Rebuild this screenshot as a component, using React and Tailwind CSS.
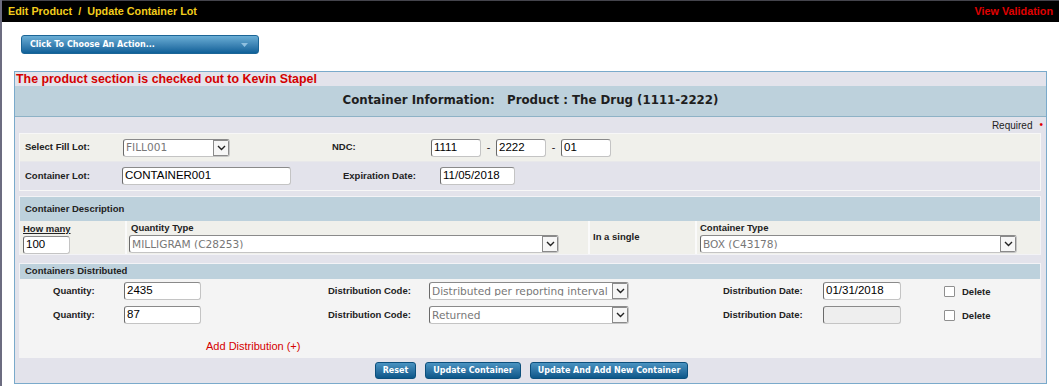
import React from 'react';

const lbl = "font-['Liberation_Sans',Arial,sans-serif] font-bold text-[9.5px] text-[#222]";

const Chevron = () => (
  <svg width="9" height="6" viewBox="0 0 9 6">
    <path d="M1 1 L4.5 4.5 L8 1" fill="none" stroke="#222" strokeWidth="1.4" />
  </svg>
);

const TextBox = ({ value, width, disabled }) => (
  <div
    className={`h-[18px] ${width} rounded-[3px] border border-[#c4c4c4] border-t-[#8a8a8a] border-l-[#6a6a6a] ${disabled ? 'bg-[#eeeeee]' : 'bg-white'} px-[2px] flex items-center font-['Liberation_Sans',Arial,sans-serif] text-[11.5px] text-black leading-none`}
  >
    {value}
  </div>
);

const SelectBox = ({ value, width }) => (
  <div
    className={`h-[18px] ${width} rounded-[3px] border border-[#c4c4c4] border-t-[#8a8a8a] border-l-[#6a6a6a] bg-white flex items-center overflow-hidden`}
  >
    <span className="flex-1 pl-[2px] whitespace-nowrap overflow-hidden font-['DejaVu_Sans',Verdana,sans-serif] text-[10.6px] text-[#777] leading-none">
      {value}
    </span>
    <span className="w-[16px] h-[16px] shrink-0 border border-[#8a8a8a] bg-[#f6f6f6] flex items-center justify-center">
      <Chevron />
    </span>
  </div>
);

const BlueButton = ({ children }) => (
  <button className="h-[17px] px-[7px] rounded-[3px] bg-gradient-to-b from-[#4a93c1] to-[#0b5789] border border-[#0c4f7c] text-white font-['DejaVu_Sans',Verdana,sans-serif] font-bold text-[8px] leading-none">
    {children}
  </button>
);

const SectionHead = ({ children }) => (
  <div className="h-[24px] bg-[#bdd1dc] flex items-center pl-[5px]">
    <span className={lbl}>{children}</span>
  </div>
);

const DistRow = ({ qty, code, date, disabled }) => (
  <div className="h-[24px] flex items-center">
    <span className={`${lbl} w-[71px] pl-[33px] box-content`}>Quantity:</span>
    <TextBox value={qty} width="w-[77px]" />
    <span className={`${lbl} ml-[127px] w-[101px]`}>Distribution Code:</span>
    <SelectBox value={code} width="w-[200px]" />
    <span className={`${lbl} ml-[94px] w-[100px]`}>Distribution Date:</span>
    <TextBox value={date} width="w-[78px]" disabled={disabled} />
    <span className="ml-[43px] w-[11px] h-[11px] border border-[#8f8f8f] bg-white rounded-[1px]" />
    <span className={`${lbl} ml-[7px] mt-[3px]`}>Delete</span>
  </div>
);

export default function App() {
  return (
    <div className="w-[1059px] min-h-[386px] bg-white border-l-2 border-[#6c6c80]">
      <div className="h-[22px] bg-black border-t border-[#44444c] flex items-center justify-between pl-[6px] pr-[6px] font-['Liberation_Sans',Arial,sans-serif] font-bold text-[10.8px]">
        <span className="text-[#f2cd1c]">Edit Product&nbsp; /&nbsp; Update Container Lot</span>
        <span className="text-[#e00000]">View Validation</span>
      </div>

      <div className="pt-[13px] pl-[19px]">
        <div className="w-[238px] h-[19px] rounded-[3px] bg-gradient-to-b from-[#6aaed5] to-[#0d6199] border border-[#1b6596] flex items-center justify-between pl-[8px] pr-[10px]">
          <span className="text-white font-['DejaVu_Sans',Verdana,sans-serif] font-bold text-[8px] leading-none">Click To Choose An Action...</span>
          <svg width="7" height="4" viewBox="0 0 7 4">
            <path d="M0 0 L7 0 L3.5 4 Z" fill="#8fc0e0" />
          </svg>
        </div>
      </div>

      <div className="mt-[17px] ml-[12px] w-[1033px] border border-[#7aaacb] bg-[#e3e3eb]">
        <div className="h-[14px] pl-[1px] flex items-center font-['Liberation_Sans',Arial,sans-serif] font-bold text-[12.4px] text-[#d40000] leading-none">
          The product section is checked out to Kevin Stapel
        </div>
        <div className="h-[31px] bg-[#bdd1dc] border-b border-[#8eb2c6] flex items-center justify-center font-['DejaVu_Sans',Verdana,sans-serif] font-bold text-[11.8px] text-[#1e1e1e]">
          Container Information:&nbsp;&nbsp; Product : The Drug (1111-2222)
        </div>
        <div className="h-[16px] flex items-center justify-end pr-[3px] font-['Liberation_Sans',Arial,sans-serif] text-[10px] text-[#222]">
          Required
          <span className="ml-[7px] text-[#e00000] text-[10px] leading-none">•</span>
        </div>

        <div className="mx-[4px] mr-[5px] border border-[#f7f7f7]">
          <div className="h-[28px] bg-[#f0f0eb] flex items-center pl-[5px] border-b border-[#e8e8ea]">
            <span className={`${lbl} w-[98px]`}>Select Fill Lot:</span>
            <SelectBox value="FILL001" width="w-[107px]" />
            <span className={`${lbl} ml-[102px] w-[99px]`}>NDC:</span>
            <TextBox value="1111" width="w-[50px]" />
            <span className="w-[15px] text-center text-[11px] text-[#222]">-</span>
            <TextBox value="2222" width="w-[50px]" />
            <span className="w-[15px] text-center text-[11px] text-[#222]">-</span>
            <TextBox value="01" width="w-[50px]" />
          </div>
          <div className="h-[28px] bg-[#e3e3eb] flex items-center pl-[5px]">
            <span className={`${lbl} w-[97px]`}>Container Lot:</span>
            <TextBox value="CONTAINER001" width="w-[169px]" />
            <span className={`${lbl} ml-[52px] w-[97px]`}>Expiration Date:</span>
            <TextBox value="11/05/2018" width="w-[75px]" />
          </div>
        </div>

        <div className="mt-[5px] mx-[4px] mr-[5px] border border-[#f3f3f6]">
          <SectionHead>Container Description</SectionHead>
          <div className="h-[33px] bg-[#f0f0eb] flex">
            <div className="w-[107px] border-r-2 border-[#fafafa] pl-[3px] pt-[2px]">
              <div className={`${lbl} underline leading-[12px] mb-[1px]`}>How many</div>
              <TextBox value="100" width="w-[47px]" />
            </div>
            <div className="w-[463px] border-r-2 border-[#fafafa] pl-[2px] pt-[1px]">
              <div className={`${lbl} leading-[12px] mb-[1px] pl-[2px]`}>Quantity Type</div>
              <SelectBox value="MILLIGRAM (C28253)" width="w-[430px]" />
            </div>
            <div className="w-[107px] border-r-2 border-[#fafafa] pl-[3px] flex items-center">
              <span className={lbl}>In a single</span>
            </div>
            <div className="flex-1 pl-[3px] pt-[1px]">
              <div className={`${lbl} leading-[12px] mb-[1px]`}>Container Type</div>
              <SelectBox value="BOX (C43178)" width="w-[317px]" />
            </div>
          </div>
        </div>

        <div className="mt-[8px] mx-[4px] mr-[5px] border-t border-x border-[#f3f3f6]">
          <div className="h-[15px] bg-[#bdd1dc] flex items-center pl-[5px]">
            <span className={lbl}>Containers Distributed</span>
          </div>
          <div className="h-[79px] bg-[#f4f4f4]">
            <DistRow qty="2435" code="Distributed per reporting interval" date="01/31/2018" />
            <DistRow qty="87" code="Returned" date="" disabled />
            <div className="pl-[186px] pt-[11px] font-['Liberation_Sans',Arial,sans-serif] text-[11px] text-[#d40000]">
              Add Distribution (+)
            </div>
          </div>
        </div>

        <div className="h-[25px] flex items-center justify-center gap-[9px] pl-[2px]">
          <BlueButton>Reset</BlueButton>
          <BlueButton>Update Container</BlueButton>
          <BlueButton>Update And Add New Container</BlueButton>
        </div>
      </div>
    </div>
  );
}
